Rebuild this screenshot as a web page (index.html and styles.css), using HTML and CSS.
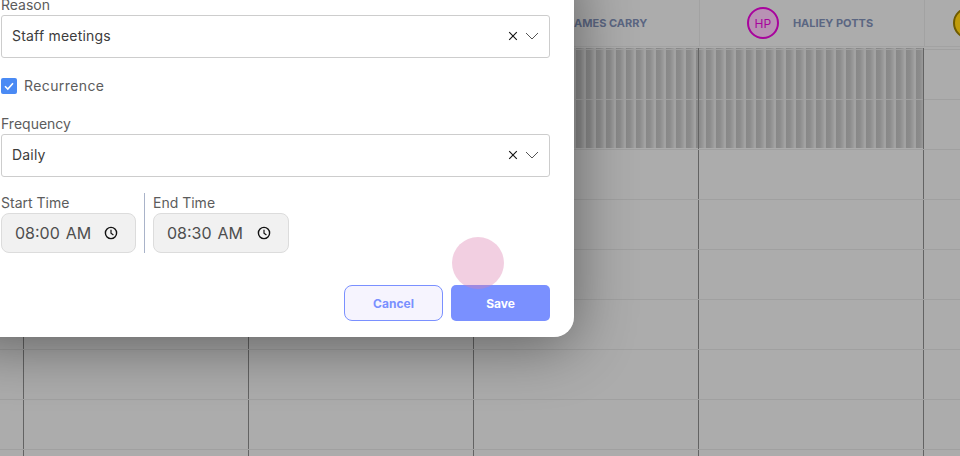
FILE: index.html
```html
<!DOCTYPE html>
<html lang="en">

<head>
    <meta charset="UTF-8">
    <meta name="viewport" content="width=device-width, initial-scale=1.0">
    <title>Schedule</title>
    <link rel="stylesheet" href="styles.css">
</head>

<body>
    <div class="schedule">
        <div class="headRow">
            <div class="headCell"></div>
            <div class="headCell"></div>
            <div class="headCell"></div>
            <div class="headCell">
                <span class="avatar avatarPink">JC</span>
                <span class="headName">JAMES CARRY</span>
            </div>
            <div class="headCell">
                <span class="avatar avatarPink">HP</span>
                <span class="headName">HALIEY POTTS</span>
            </div>
            <div class="headCell headLast">
                <span class="avatar avatarGold"></span>
            </div>
        </div>
        <div class="grid">
            <div class="stripes"></div>
        </div>
    </div>

    <div class="shadow"></div>

    <div class="modal">
        <label class="label labelReason">Reason</label>
        <div class="select">
            <span>Staff meetings</span>
            <span class="selectIcons">
                <svg width="10" height="10" viewBox="0 0 10 10"><path d="M1.2 1.2L8.8 8.8M8.8 1.2L1.2 8.8" stroke="#111" stroke-width="1.1" fill="none" /></svg>
                <svg width="14" height="8" viewBox="0 0 14 8"><path d="M1 1L7 7L13 1" stroke="#555" stroke-width="1" fill="none" /></svg>
            </span>
        </div>

        <div class="check">
            <span class="checkBox">
                <svg width="16" height="16" viewBox="0 0 16 16"><path d="M4 8.2L6.8 11L12 5.2" stroke="#fff" stroke-width="1.6" fill="none" /></svg>
            </span>
            <span class="checkText">Recurrence</span>
        </div>

        <label class="label">Frequency</label>
        <div class="select selectFreq">
            <span>Daily</span>
            <span class="selectIcons">
                <svg width="10" height="10" viewBox="0 0 10 10"><path d="M1.2 1.2L8.8 8.8M8.8 1.2L1.2 8.8" stroke="#111" stroke-width="1.1" fill="none" /></svg>
                <svg width="14" height="8" viewBox="0 0 14 8"><path d="M1 1L7 7L13 1" stroke="#555" stroke-width="1" fill="none" /></svg>
            </span>
        </div>

        <div class="times">
            <div class="time">
                <label class="label">Start Time</label>
                <div class="timeBox">
                    <span class="timeText">08:00&nbsp; AM</span>
                    <svg width="14" height="14" viewBox="0 0 14 14"><circle cx="7" cy="7" r="5.6" stroke="#111" stroke-width="1.4" fill="none" /><path d="M7 3.8V7.2L9.4 9" stroke="#111" stroke-width="1.2" fill="none" /></svg>
                </div>
            </div>
            <div class="time timeEnd">
                <label class="label">End Time</label>
                <div class="timeBox">
                    <span class="timeText">08:30&nbsp; AM</span>
                    <svg width="14" height="14" viewBox="0 0 14 14"><circle cx="7" cy="7" r="5.6" stroke="#111" stroke-width="1.4" fill="none" /><path d="M7 3.8V7.2L9.4 9" stroke="#111" stroke-width="1.2" fill="none" /></svg>
                </div>
            </div>
        </div>

        <div class="buttons">
            <button class="btn btnCancel">Cancel</button>
            <button class="btn btnSave">Save</button>
        </div>
    </div>

    <div class="cursor"></div>
</body>

</html>
```

FILE: styles.css
```css
* {
    box-sizing: border-box;
}

body {
    margin: 0;
    padding: 0;
    width: 960px;
    height: 456px;
    overflow: hidden;
    position: relative;
    background: #acacac;
    font-family: "Inter", "Noto Sans", sans-serif;
}

/* schedule behind the dialog */
.schedule {
    width: 960px;
    height: 456px;
    overflow: hidden;
}

.headRow {
    display: grid;
    grid-template-columns: 24px 225px 225px 226px 225px 35px;
    height: 47px;
    border-bottom: 1px solid #a2a2a2;
}

.headCell {
    display: flex;
    align-items: center;
    justify-content: center;
    gap: 14px;
    padding-right: 4px;
    border-right: 1px solid #a2a2a2;
}

.headLast {
    border-right: 0;
    justify-content: flex-start;
    padding-left: 28px;
}

.headName {
    color: #5b6682;
    font-size: 11px;
    font-weight: 700;
}

.avatar {
    display: flex;
    align-items: center;
    justify-content: center;
    flex: none;
    width: 32px;
    height: 32px;
    border-radius: 50%;
    font-size: 12px;
}

.avatarPink {
    border: 2px solid #a8039d;
    background: #b892b4;
    color: #a8039d;
}

.avatarGold {
    border: 2px solid #6f5b00;
    background: #c09c0c;
}

.grid {
    position: relative;
    height: 407px;
    margin-top: 2px;
    background-image:
        linear-gradient(#a0a0a0 0, #a0a0a0 1px, transparent 1px),
        linear-gradient(90deg, #636363 0, #636363 1px, transparent 1px);
    background-size: 100% 50px, 225px 100%;
    background-position: 0 0, 23px 0;
}

.stripes {
    position: absolute;
    top: -1px;
    left: 574px;
    width: 350px;
    height: 100px;
    background-image:
        linear-gradient(90deg, #636363 0, #636363 1px, transparent 1px),
        linear-gradient(#a0a0a0 0, #a0a0a0 1px, transparent 1px),
        repeating-linear-gradient(90deg, #a2a2a2 0, #a2a2a2 2px, #888 2px, #8c8c8c 6px, #9e9e9e 10px);
    background-size: 225px 100%, 100% 50px, auto;
    background-position: 124px 0, 0 1px, 0 0;
}

/* dialog */
.shadow {
    position: absolute;
    top: -40px;
    left: -40px;
    width: 614px;
    height: 377px;
    border-radius: 20px;
    box-shadow: 0 8px 60px rgba(0, 0, 0, 0.45);
}

.modal {
    position: absolute;
    top: -20px;
    left: -20px;
    width: 594px;
    height: 357px;
    padding: 20px 24px 0 21px;
    background: #fff;
    border-radius: 0 0 20px 0;
    color: #4a4a4a;
    font-size: 14px;
}

.label {
    display: block;
    height: 15px;
    line-height: 15px;
    color: #5c5c5c;
    font-size: 14px;
}

.labelReason {
    margin-top: -3px;
    margin-bottom: -2px;
}

.select {
    display: flex;
    align-items: center;
    justify-content: space-between;
    height: 43px;
    margin-top: 5px;
    padding: 0 10px 2px;
    border: 1px solid #cdcdcd;
    border-radius: 3px;
    color: #3c3c3c;
    font-size: 14px;
    letter-spacing: 0.2px;
}

.selectFreq {
    margin-top: 3px;
}

.selectIcons {
    display: flex;
    align-items: center;
    gap: 7px;
}

.check {
    display: flex;
    align-items: center;
    gap: 7px;
    height: 16px;
    margin: 20px 0 22px;
    color: #5c5c5c;
}

.checkText {
    padding-bottom: 1px;
    letter-spacing: 0.4px;
}

.checkBox {
    width: 16px;
    height: 16px;
    border-radius: 2px;
    background: #4a8af4;
}

.times {
    display: flex;
    margin-top: 16px;
}

.time {
    width: 143px;
    padding-top: 2px;
}

.timeEnd {
    width: 146px;
    padding-left: 8px;
    border-left: 1px solid #a9b3c9;
}

.timeBox {
    display: flex;
    align-items: center;
    justify-content: space-between;
    width: 135px;
    height: 40px;
    margin-top: 3px;
    padding: 0 17px 0 13px;
    border: 1px solid #dcdcdc;
    border-radius: 8px;
    background: #f1f1f1;
}

.timeEnd .timeBox {
    width: 136px;
}

.timeText {
    color: #4e4e4e;
    font-size: 16px;
    word-spacing: -1.5px;
}

.buttons {
    display: flex;
    justify-content: flex-end;
    gap: 8px;
    margin-top: 32px;
}

.btn {
    width: 99px;
    height: 36px;
    font-family: inherit;
    font-size: 12px;
    font-weight: 700;
}

.btnCancel {
    border: 1px solid #7a90ff;
    border-radius: 8px;
    background: #f6f4fe;
    color: #7a90ff;
}

.btnSave {
    border: 0;
    border-radius: 5px;
    background: #7a90ff;
    color: #fff;
}

/* click marker of the recording */
.cursor {
    position: absolute;
    top: 237px;
    left: 452px;
    width: 52px;
    height: 52px;
    border-radius: 50%;
    background: rgba(220, 130, 175, 0.38);
}
```
